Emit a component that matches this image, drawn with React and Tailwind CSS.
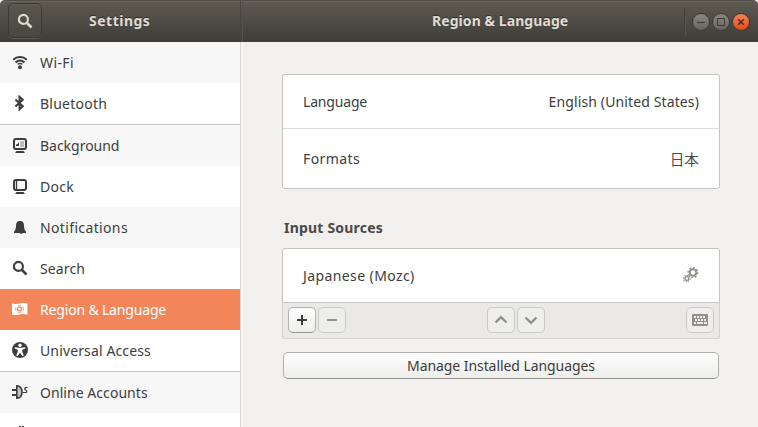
const ink = '#3d3d3d';

function Svg({ children, size = 16, className = '' }) {
  return (
    <svg width={size} height={size} viewBox={`0 0 ${size} ${size}`} fill="none" className={`shrink-0 ${className}`}>
      {children}
    </svg>
  );
}

const WifiIcon = () => (
  <Svg>
    <path d="M1.200 5.700C3.200 3.800 5.400 3 8 3s4.800.8 6.800 2.700" stroke={ink} strokeWidth="2.100" />
    <path d="M3.600 8.400C4.900 7.200 6.300 6.600 8 6.600s3.100.6 4.400 1.800" stroke={ink} strokeWidth="2" />
    <path d="M5.600 10.300C6.300 9.700 7 9.500 8 9.500s1.700.2 2.400.8" stroke={ink} strokeWidth="1.300" />
    <circle cx="8" cy="13.200" r="2" fill={ink} />
  </Svg>
);

const BluetoothIcon = () => (
  <Svg>
    <path d="M3.400 4.500l7.400 6.800-3.300 3V1.800l3.300 3-7.400 6.800" stroke={ink} strokeWidth="2" />
  </Svg>
);

const BackgroundIcon = () => (
  <Svg>
    <rect x="2" y="2" width="12" height="10" rx="2" stroke={ink} strokeWidth="2" />
    <rect x="4" y="4" width="8" height="6" fill="#fff" />
    <path d="M4 9h3V4.500L5.800 7 4 7.500z" fill={ink} />
    <path d="M8 4h4v6H8z" fill="#bdbdbd" />
    <path d="M4.500 14h7l1.500 2H3z" fill={ink} />
  </Svg>
);

const DockIcon = () => (
  <Svg>
    <rect x="2" y="2" width="12" height="10" rx="2" stroke={ink} strokeWidth="2" />
    <path d="M4.500 3v8" stroke={ink} strokeWidth="1.400" />
    <path d="M4.500 14h7l1.500 2H3z" fill={ink} />
  </Svg>
);

const BellIcon = () => (
  <Svg>
    <path d="M8 2C5 2 4 4 4 6.500c0 3-.6 4.800-2 6.300v1.200h12v-1.200c-1.400-1.500-2-3.300-2-6.300C12 4 11 2 8 2zM7.600 14.200h2.800v.9H8.400z" fill={ink} />
  </Svg>
);

const SearchIcon = ({ color = ink }) => (
  <Svg>
    <circle cx="6.400" cy="6.400" r="4.500" stroke={color} strokeWidth="2.100" />
    <path d="M9.500 9.500l5 5" stroke={color} strokeWidth="2.500" />
  </Svg>
);

const FlagIcon = () => (
  <Svg>
    <path d="M0 2.200c3.500 1.200 5 .9 8 .3s5-.5 7.400 0v11.200c-2.400-.8-4.400-.8-7.400-.2s-4.500.9-8-.3z" fill="#fff" />
    <circle cx="7.500" cy="7.800" r="2" stroke="#f3855a" strokeWidth="1.200" />
    <path d="M3.800 5.800v4M11.300 5.800v4M5.800 4.300h3.400M5.800 11.300h3.400" stroke="#f6a585" strokeWidth="1" />
  </Svg>
);

const AccessIcon = () => (
  <Svg>
    <circle cx="8" cy="8" r="8" fill={ink} />
    <circle cx="8" cy="3.300" r="1.700" fill="#fff" />
    <path d="M2.800 5.200l3.700.6h3l3.700-.6.2 1.300-3.200 1.200v2l1.600 3.800-1.400.7L8 10.600l-2.400 3.600-1.400-.7 1.600-3.800v-2L2.600 6.500z" fill="#fff" />
  </Svg>
);

const OnlineIcon = () => (
  <Svg>
    <path d="M0 6h4M0 11h4" stroke={ink} strokeWidth="2" />
    <path d="M4.800 1.800v12.400C8 14 10 11.600 10 8S8 2 4.800 1.800z" fill="#c4c4c4" stroke={ink} strokeWidth="1.600" />
    <path d="M10.500 8.500h3c1.600 0 1.700-1.600.5-2.200-1.900-.9-2-3.200 1.600-2.800" stroke={ink} strokeWidth="1.200" />
  </Svg>
);

const SharingIcon = () => (
  <Svg>
    <path d="M7 1h2v2H7zM10 1h2v2h-2z" fill={ink} />
  </Svg>
);

const groups = [
  [
    { label: 'Wi-Fi', icon: WifiIcon, row: 'bg-[#f7f7f7]', text: 'tracking-[0.4px]' },
    { label: 'Bluetooth', icon: BluetoothIcon, row: 'bg-white', text: 'tracking-[0.24px]' },
  ],
  [
    { label: 'Background', icon: BackgroundIcon, row: 'bg-[#f7f7f7]', text: 'tracking-[-0.02px]' },
    { label: 'Dock', icon: DockIcon, row: 'bg-white', text: 'tracking-[0.25px]' },
    { label: 'Notifications', icon: BellIcon, row: 'bg-[#f7f7f7]', text: 'tracking-[0.36px]' },
    { label: 'Search', icon: SearchIcon, row: 'bg-white', text: 'tracking-[0.12px]' },
    { label: 'Region & Language', icon: FlagIcon, row: 'bg-[#f3855a]', text: 'tracking-[-0.17px] text-white' },
    { label: 'Universal Access', icon: AccessIcon, row: 'bg-white', text: 'tracking-[0.13px]' },
  ],
  [
    { label: 'Online Accounts', icon: OnlineIcon, row: 'bg-[#f7f7f7]', text: 'tracking-[0.05px]' },
    { label: '', icon: SharingIcon, row: 'bg-white', text: '' },
  ],
];

function Header() {
  return (
    <header className="flex h-[42px] shrink-0 rounded-t-[5px] border-t border-[#504e47] bg-linear-to-b from-[#5d5a51] to-[#3e3d38] text-[#dfdbd2] font-bold [text-shadow:0_-1px_#32312d] shadow-[inset_0_1px_#69665c]">
      <div className="flex w-[240px] items-start pl-2 pt-[2px]">
        <div className="flex h-[35px] w-[34px] items-center justify-center rounded-[5px] border border-[#3a3934] bg-linear-to-b from-[#59574e] to-[#484740] shadow-[0_1px_#5a584f,inset_0_1px_#605e55]">
          <SearchIcon color="#dfdbd2" />
        </div>
        <h1 className="ml-[47px] pt-2 leading-5 tracking-[0.5px]">Settings</h1>
      </div>
      <div className="w-[3px] border-l border-r border-l-[#47453f] border-r-[#56544c]" />
      <div className="flex flex-1 items-start">
        <h1 className="ml-[189px] whitespace-nowrap pt-[10px] leading-5 tracking-[0.07px]">Region &amp; Language</h1>
        <div className="ml-auto mr-[8px] flex items-center gap-[2px] self-center">
          <div className="mr-[4px] h-[28px] w-[2px] border-l border-r border-l-[#42413b] border-r-[#56544c]" />
          <div className="flex size-[18px] items-center justify-center rounded-full border border-[#3b3a35] bg-linear-to-b from-[#8a8880] to-[#66645d]">
            <Svg><path d="M4 8.500h8" stroke="#3b3a35" /></Svg>
          </div>
          <div className="flex size-[18px] items-center justify-center rounded-full border border-[#3b3a35] bg-linear-to-b from-[#8a8880] to-[#66645d]">
            <Svg><path d="M4.500 4.500h7v7h-7z" stroke="#3b3a35" /></Svg>
          </div>
          <div className="flex size-[18px] items-center justify-center rounded-full border border-[#3b3a35] bg-linear-to-b from-[#f57f57] to-[#e34d19]">
            <Svg><path d="M5.200 5.200l5.600 5.600M10.800 5.200l-5.600 5.600" stroke="#4a2a1d" strokeWidth="1.500" /></Svg>
          </div>
        </div>
      </div>
    </header>
  );
}

function Sidebar() {
  return (
    <nav className="w-[241px] shrink-0 overflow-hidden border-r border-[#d9d6d3] bg-white">
      {groups.map((items, g) => (
        <div key={g} className={g ? 'border-t border-[#c6c3bf]' : ''}>
          {items.map(({ label, icon: Icon, row, text }) => (
            <div key={label} className={`flex h-[41px] items-start gap-3 pl-3 pt-3 ${row}`}>
              <Icon />
              <span className={`-mt-px whitespace-nowrap ${text}`}>{label}</span>
            </div>
          ))}
        </div>
      ))}
    </nav>
  );
}

function ToolButton({ children, enabled, className = '' }) {
  const look = enabled
    ? 'border-[#b3b0ad] border-b-[#94918e] bg-linear-to-b from-white to-[#ededec]'
    : 'border-[#cbc9c7] bg-[#eeeeed]';
  return (
    <button className={`flex h-[26px] w-[28px] items-center justify-center rounded-[5px] border ${look} ${className}`}>
      {children}
    </button>
  );
}

const grey = '#949089';

function Gear({ cx, cy, r, w }) {
  return (
    <g stroke={grey}>
      <circle cx={cx} cy={cy} r={r} strokeWidth={w} />
      <circle cx={cx} cy={cy} r={r + w / 2 + 0.6} strokeWidth="1.400" pathLength="16" strokeDasharray="1 1" />
    </g>
  );
}

const keys = [
  [2, 4, 2], [5, 4, 2], [8, 4, 2], [11, 4, 2],
  [3, 7, 2], [6, 7, 2], [9, 7, 2], [12, 7, 2],
  [2, 10, 2], [5, 10, 6], [12, 10, 3],
];

export default function App() {
  return (
    <div className="flex h-[427px] w-[758px] flex-col overflow-hidden bg-[#f1f0ee] font-['Noto_Sans','Noto_Sans_CJK_JP',sans-serif] text-[14px] leading-5 text-[#3d3d3d]">
      <Header />
      <div className="flex min-h-0 flex-1">
        <Sidebar />
        <main className="flex flex-1 flex-col border-l-2 border-[#f6f5f4] pl-[39px] pr-[38px] pt-8">
          <section className="rounded-[3px] border border-[#c6c3bf] bg-white">
            <div className="flex h-[54px] items-center justify-between border-b border-[#dcdad8] px-5">
              <span className="tracking-[-0.18px]">Language</span>
              <span className="tracking-[0.12px]">English (United States)</span>
            </div>
            <div className="flex h-[59px] items-center justify-between px-5">
              <span className="tracking-[0.4px]">Formats</span>
              <span className="font-['Noto_Sans_CJK_JP',sans-serif] text-[14.67px] text-[#4a4a4a]">日本</span>
            </div>
          </section>
          <h2 className="ml-[2px] mt-[29px] font-bold tracking-[0.2px] text-[#4a4a4a]">Input Sources</h2>
          <section className="mt-[10px]">
            <div className="flex h-[55px] items-center justify-between rounded-t-[3px] border border-[#c6c3bf] bg-white px-5">
              <span className="tracking-[0.4px]">Japanese (Mozc)</span>
              <Svg className="mb-px">
                <Gear cx={10} cy={5.500} r={3.300} w={2.100} />
                <Gear cx={3.800} cy={11.500} r={1.900} w={1.300} />
              </Svg>
            </div>
            <div className="flex h-[36px] items-start justify-between rounded-b-[3px] border border-t-0 border-[#d4d2d0] bg-[#eae9e8] px-[5px] pt-1">
              <div className="flex gap-[2px]">
                <ToolButton enabled><Svg><path d="M3 8h10M8 3v10" stroke="#3d3d3d" strokeWidth="2" /></Svg></ToolButton>
                <ToolButton><Svg><path d="M3 8h10" stroke={grey} strokeWidth="2" /></Svg></ToolButton>
              </div>
              <div className="flex gap-[2px]">
                <ToolButton><Svg><path d="M2.500 10.500L8 5.200l5.500 5.300" stroke={grey} strokeWidth="2.400" /></Svg></ToolButton>
                <ToolButton><Svg><path d="M2.500 5.500L8 10.800l5.500-5.300" stroke={grey} strokeWidth="2.400" /></Svg></ToolButton>
              </div>
              <ToolButton>
                <Svg>
                  <rect x="0" y="2" width="16" height="12" rx="1" fill={grey} />
                  {keys.map(([x, y, w]) => <rect key={`${x}-${y}`} x={x} y={y} width={w} height="2" fill="#eeeeed" />)}
                </Svg>
              </ToolButton>
            </div>
          </section>
          <button className="mx-px mt-[13px] flex h-[27px] items-center justify-center rounded-[5px] border border-[#b3b0ad] border-b-[#94918e] bg-linear-to-b from-white to-[#ededec] tracking-[-0.07px]">
            Manage Installed Languages
          </button>
        </main>
      </div>
    </div>
  );
}
